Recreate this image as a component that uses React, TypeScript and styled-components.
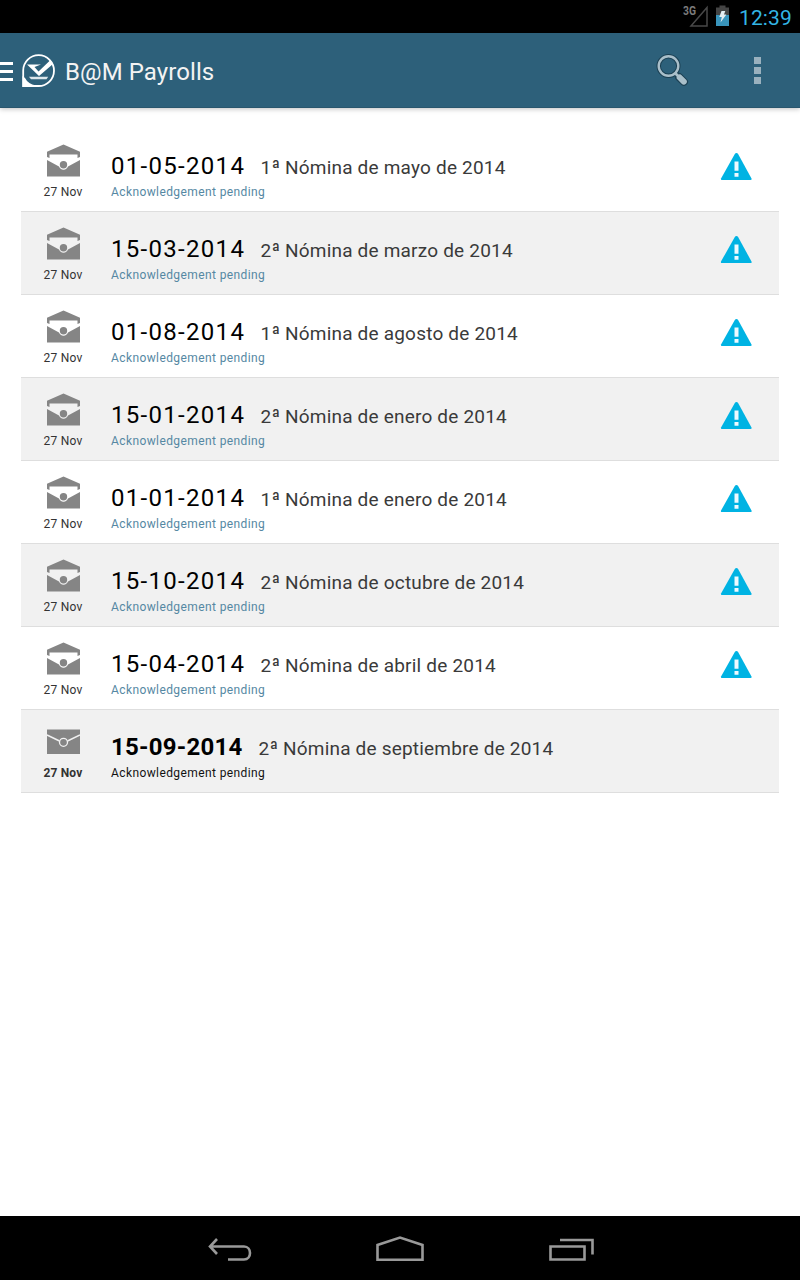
import React from 'react';
import styled, { createGlobalStyle } from 'styled-components';

const GlobalStyle = createGlobalStyle`
  * { box-sizing: border-box; }
  body { margin: 0; background: #fff; font-family: Roboto, sans-serif; }
  svg { display: block; flex: none; }
`;

const Screen = styled.div`
  width: 800px;
  height: 1280px;
  display: flex;
  flex-direction: column;
  overflow: hidden;
`;

const StatusBar = styled.div`
  height: 33px;
  flex: none;
  background: #000;
  display: flex;
  justify-content: flex-end;
  align-items: flex-start;
  padding-right: 8px;
`;

const Clock = styled.span`
  margin: 5px 0 0 8px;
  width: 53px;
  white-space: nowrap;
  font-size: 21px;
  line-height: 26px;
  letter-spacing: 0.1px;
  color: #33b5e5;
`;

const ActionBar = styled.header`
  height: 75px;
  flex: none;
  background: #2d607a;
  border-bottom: 1px solid #29566d;
  box-shadow: 0 1px 5px rgba(0, 0, 0, 0.25);
  display: flex;
  align-items: center;
`;

const AppTitle = styled.h1`
  margin: 3px 0 0 10px;
  flex: 1;
  font-size: 24px;
  line-height: 28px;
  letter-spacing: 0.08px;
  font-weight: 400;
  color: #f3f3f3;
`;

const List = styled.ul`
  flex: 1;
  margin: 0;
  padding: 21px 21px 0;
  list-style: none;
`;

const Row = styled.li<{ $shaded: boolean }>`
  height: 83px;
  display: flex;
  border-bottom: 1px solid #dedede;
  background: ${(p) => (p.$shaded ? '#f1f1f1' : '#fff')};
`;

const Received = styled.div<{ $unread: boolean }>`
  width: 84px;
  padding-top: 14px;
  display: flex;
  flex-direction: column;
  align-items: center;
  font-size: 12px;
  line-height: 16px;
  color: #333;
  font-weight: ${(p) => (p.$unread ? 700 : 400)};
  letter-spacing: ${(p) => (p.$unread ? '0.15px' : '0.25px')};
`;

const ReceivedDate = styled.span`
  margin-top: 6px;
`;

const Details = styled.div`
  flex: 1;
  padding: 20px 0 0 6px;
`;

const Heading = styled.div`
  display: flex;
  align-items: baseline;
  height: 35px;
  line-height: 34px;
  white-space: nowrap;
`;

const PayDate = styled.span<{ $unread: boolean }>`
  width: ${(p) => (p.$unread ? 147.5 : 149.5)}px;
  font-size: 24px;
  letter-spacing: ${(p) => (p.$unread ? 0.25 : 1.3)}px;
  color: #000;
  font-weight: ${(p) => (p.$unread ? 700 : 400)};
`;

const PayName = styled.span`
  font-size: 19px;
  letter-spacing: 0.2px;
  color: #3a3a3a;
`;

const Status = styled.div<{ $unread: boolean }>`
  font-size: 12px;
  line-height: 16px;
  letter-spacing: 0.4px;
  color: ${(p) => (p.$unread ? '#111' : '#5588a3')};
`;

const WarningSlot = styled.div`
  width: 59px;
  padding-top: 23px;
`;

const NavBar = styled.nav`
  height: 64px;
  flex: none;
  background: #000;
  display: flex;
  align-items: center;
  justify-content: center;
  gap: 124px;
  padding: 4px 0 0 1px;
`;

const SignalIcon = () => (
  <svg width="28" height="33" viewBox="0 0 28 33">
    <text x="1" y="14.5" fontSize="12" fontWeight="700" fontFamily="Roboto, sans-serif" fill="#7b7b7b" textLength="13" lengthAdjust="spacingAndGlyphs">3G</text>
    <path d="M9 26L25 7.5V26Z" fill="none" stroke="#484848" strokeWidth="1.5" />
  </svg>
);

const BatteryIcon = () => (
  <svg width="21" height="33" viewBox="0 0 21 33">
    <path d="M9.5 7.5V5.5H15.5V7.5H19V15H6V7.5Z" fill="#444" />
    <path d="M6 15H19V26H6Z" fill="#3994bb" />
    <path d="M11.5 11H15.3L14 14.6H16.4L10.5 22.4L11.8 17H9.3Z" fill="#e4eef2" />
  </svg>
);

const DrawerIcon = () => (
  <svg width="22" height="75" viewBox="0 0 22 75">
    <path d="M0 29H13V32H0ZM0 37H13V40H0ZM0 45H13V48H0Z" fill="#fff" />
  </svg>
);

const LogoIcon = () => (
  <svg width="33" height="35" viewBox="0 0 33 35">
    <path d="M1.2 33V17.5A15.4 15.4 0 1 1 16.5 33Z" fill="none" stroke="#fff" strokeWidth="1.8" />
    <path d="M.5 23L3 25Q6 31 14 32.5V34H.5Z" fill="#fff" />
    <path d="M5 11.5H19L12.5 14L16.5 18.5L28.5 7L31 11L17 23Z" fill="#fff" />
    <path d="M7 23.8H26.2L24.5 26.3H9Z" fill="#dce6eb" />
  </svg>
);

const SearchIcon = () => (
  <svg width="34" height="34" viewBox="0 0 34 34">
    <g fill="none" strokeLinecap="round">
      <circle cx="12.5" cy="13" r="9.8" stroke="#1c4053" strokeWidth="4.4" />
      <path d="M19.5 20.2L22 23" stroke="#1c4053" strokeWidth="5" />
      <path d="M23 24L28 28.8" stroke="#1c4053" strokeWidth="8" />
      <circle cx="12.5" cy="13" r="9.8" stroke="#a9bfca" strokeWidth="2.4" />
      <path d="M19.5 20.5L23 24" stroke="#a9bfca" strokeWidth="2.8" />
      <path d="M23.7 24.5L27.8 28.6" stroke="#a9bfca" strokeWidth="6" />
    </g>
  </svg>
);

const SearchButton = styled.div`
  width: 98px;
`;

const OverflowIcon = () => (
  <svg width="46" height="75" viewBox="0 0 46 75">
    <path d="M0 24H7V31H0ZM0 34H7V41H0ZM0 44H7V51H0Z" fill="#9ab1be" />
  </svg>
);

const OpenEnvelope = () => (
  <svg width="34" height="35" viewBox="0 0 34 35">
    <path d="M1 8.8L17.5 1.5L34 8.8V14L31.5 15V11.5H3.5V15L1 14Z" fill="#858585" />
    <path d="M1 17L13 23.5A4.8 4.8 0 0 0 22 23.5L34 17V33.5H1Z" fill="#858585" />
    <circle cx="17.5" cy="21.8" r="3.7" fill="#858585" />
  </svg>
);

const ClosedEnvelope = () => (
  <svg width="34" height="35" viewBox="0 0 34 35">
    <path d="M1 5.5H34V30H1Z" fill="#858585" />
    <path d="M1 11L13.5 17M34 11L21.5 17" fill="none" stroke="#f1f1f1" strokeWidth="1.5" />
    <circle cx="17.5" cy="18.3" r="4" fill="#858585" stroke="#f1f1f1" strokeWidth="1.3" />
  </svg>
);

const WarningIcon = () => (
  <svg width="32" height="29" viewBox="0 0 32 29">
    <path d="M16.4 1Q17.5 1 18.1 2L31.5 26.5Q32 28 30.5 28H2Q.5 28 1 26.5L14.8 2Q15.4 1 16.4 1Z" fill="#00b3e3" />
    <path d="M14.5 9.5H18.5V18.8H14.5ZM14.5 21H18.5V24.8H14.5Z" fill="#eefaff" />
  </svg>
);

const BackIcon = () => (
  <svg width="44" height="28" viewBox="0 0 44 28">
    <path d="M9 3L2 10.5L9 18M2 10.5H36C44 10.5 44 23.5 36 23.5H20" fill="none" stroke="#999" strokeWidth="2.6" />
  </svg>
);

const HomeIcon = () => (
  <svg width="48" height="28" viewBox="0 0 48 28">
    <path d="M1.5 23.8V9L24 1.5L46.5 9V23.8Z" fill="none" stroke="#999" strokeWidth="2.6" />
  </svg>
);

const RecentsIcon = () => (
  <svg width="46" height="28" viewBox="0 0 46 28">
    <path d="M2.5 10.5H36.5V23.5H2.5ZM12 4H44.5V18.5" fill="none" stroke="#999" strokeWidth="2.6" />
  </svg>
);

interface Payroll {
  date: string;
  name: string;
  unread?: boolean;
}

const payrolls: Payroll[] = [
  { date: '01-05-2014', name: '1ª Nómina de mayo de 2014' },
  { date: '15-03-2014', name: '2ª Nómina de marzo de 2014' },
  { date: '01-08-2014', name: '1ª Nómina de agosto de 2014' },
  { date: '15-01-2014', name: '2ª Nómina de enero de 2014' },
  { date: '01-01-2014', name: '1ª Nómina de enero de 2014' },
  { date: '15-10-2014', name: '2ª Nómina de octubre de 2014' },
  { date: '15-04-2014', name: '2ª Nómina de abril de 2014' },
  { date: '15-09-2014', name: '2ª Nómina de septiembre de 2014', unread: true },
];

const PayrollRow = ({ item, shaded }: { item: Payroll; shaded: boolean }) => {
  const unread = !!item.unread;
  return (
    <Row $shaded={shaded}>
      <Received $unread={unread}>
        {unread ? <ClosedEnvelope /> : <OpenEnvelope />}
        <ReceivedDate>27 Nov</ReceivedDate>
      </Received>
      <Details>
        <Heading>
          <PayDate $unread={unread}>{item.date}</PayDate>
          <PayName>{item.name}</PayName>
        </Heading>
        <Status $unread={unread}>Acknowledgement pending</Status>
      </Details>
      <WarningSlot>{!unread && <WarningIcon />}</WarningSlot>
    </Row>
  );
};

export default function App() {
  return (
    <Screen>
      <GlobalStyle />
      <StatusBar>
        <SignalIcon />
        <BatteryIcon />
        <Clock>12:39</Clock>
      </StatusBar>
      <ActionBar>
        <DrawerIcon />
        <LogoIcon />
        <AppTitle>B@M Payrolls</AppTitle>
        <SearchButton>
          <SearchIcon />
        </SearchButton>
        <OverflowIcon />
      </ActionBar>
      <List>
        {payrolls.map((item, i) => (
          <PayrollRow key={item.date} item={item} shaded={i % 2 === 1} />
        ))}
      </List>
      <NavBar>
        <BackIcon />
        <HomeIcon />
        <RecentsIcon />
      </NavBar>
    </Screen>
  );
}
